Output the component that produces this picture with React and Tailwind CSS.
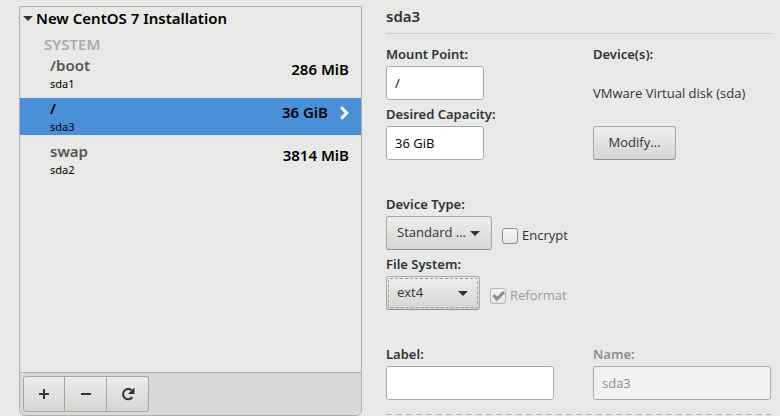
import { useState } from 'react';

const mountPoints = [
  { name: '/boot', device: 'sda1', size: '286 MiB' },
  { name: '/', device: 'sda3', size: '36 GiB' },
  { name: 'swap', device: 'sda2', size: '3814 MiB' },
];

const ArrowDown = ({ className }) => (
  <svg viewBox="0 0 10 5" className={`h-[5px] w-[10px] ${className}`} fill="currentColor" aria-hidden="true">
    <path d="M0 0h10L5 5z" />
  </svg>
);

const Field = ({ id, label, disabled, children }) => (
  <div className="flex flex-col items-start">
    <label htmlFor={id} className={`h-5 font-['Noto_Sans',sans-serif] text-[13px] leading-4 font-semibold ${disabled ? 'text-[#8d8f8f]' : ''}`}>
      {label}
    </label>
    {children}
  </div>
);

const TextBox = ({ className = '', ...props }) => (
  <input
    type="text"
    className={`h-[34px] rounded-[3px] border border-[#a9a9a6] bg-white px-2 text-[13px] text-black outline-none disabled:bg-[#f1f1f1] disabled:text-[#8d8f8f] ${className}`}
    {...props}
  />
);

const Dropdown = ({ id, className, children }) => (
  <div className={`relative ${className}`}>
    <select
      id={id}
      className="h-[34px] w-full appearance-none rounded-[3px] border border-[#a7a7a4] border-b-[#8f8f8c] bg-linear-to-b from-[#ededec] to-[#d5d5d3] pl-[10px] text-[13px] outline-none"
    >
      {children}
    </select>
    <ArrowDown className="pointer-events-none absolute top-[15px] right-[12px]" />
  </div>
);

const CheckBox = ({ label, disabled, ...props }) => (
  <label className={`flex h-7 items-center gap-1 self-end text-[13px] ${disabled ? 'text-[#9a9b9b]' : ''}`}>
    <span className="relative size-4">
      <input
        type="checkbox"
        disabled={disabled}
        className="peer block size-4 appearance-none rounded-[3px] border border-[#8f8f8c] bg-linear-to-b from-[#f4f4f4] to-[#e6e6e5] disabled:border-[#b4b4b2]"
        {...props}
      />
      <svg viewBox="0 0 16 16" className="pointer-events-none invisible absolute inset-0 size-4 peer-checked:visible" fill="none" stroke="#8d8f8f" strokeWidth="3" aria-hidden="true">
        <path d="M3.5 7l3.4 4L14 4" />
      </svg>
    </span>
    {label}
  </label>
);

const App = () => {
  const [selected, setSelected] = useState('sda3');
  const [encrypt, setEncrypt] = useState(false);

  const toolButton = 'flex h-9 w-[42px] items-center justify-center border-[#a7a7a4] bg-linear-to-b from-[#ededec] to-[#d5d5d3]';

  return (
    <div className="grid min-h-screen grid-cols-[343fr_385fr] gap-6 bg-[#e8e8e7] pt-1.5 pr-[9px] pl-[19px] text-[#2e3436]">
      <section className="flex flex-col rounded-b-md border border-[#b0b0a9] font-['Noto_Sans',sans-serif]">
        <h2 className="flex h-[22px] items-center gap-[3px] pl-[3px] text-[15px] font-semibold text-black">
          <ArrowDown className="text-[#2e3436]" />
          New CentOS 7 Installation
        </h2>
        <h3 className="mt-[5px] pl-6 text-[15px] leading-[21px] font-semibold text-[#aaaaa9]">SYSTEM</h3>
        <ul className="flex flex-1 flex-col gap-1.5">
          {mountPoints.map((mp) => {
            const active = mp.device === selected;
            return (
              <li key={mp.device}>
                <button
                  type="button"
                  onClick={() => setSelected(mp.device)}
                  className={`flex h-[37px] w-full items-start justify-between pr-3 pl-[30px] text-left text-black ${active ? 'bg-[#4a90d9]' : ''}`}
                >
                  <span>
                    <span className={`block text-[15px] leading-[21px] font-semibold ${active ? '' : 'text-[#555756]'}`}>{mp.name}</span>
                    <span className="block text-[11px] leading-[15px]">{mp.device}</span>
                  </span>
                  <span className="flex items-center gap-3 text-[15px] leading-[29px] font-semibold">
                    {mp.size}
                    {active && (
                      <svg viewBox="0 0 9 14" className="h-[14px] w-[9px]" fill="none" stroke="#fff" strokeWidth="3" aria-hidden="true">
                        <path d="M1.2 1.2L6.8 7l-5.6 5.8" />
                      </svg>
                    )}
                  </span>
                </button>
              </li>
            );
          })}
        </ul>
        <div className="flex rounded-b-md border-t border-[#b0b0ae] bg-[#d8d8d7] p-[3px]">
          <button type="button" aria-label="Add" className={`${toolButton} rounded-l-[3px] border`}>
            <svg viewBox="0 0 12 12" className="size-3" stroke="currentColor" strokeWidth="2" aria-hidden="true">
              <path d="M6 1v10M1 6h10" />
            </svg>
          </button>
          <button type="button" aria-label="Remove" className={`${toolButton} border-y border-r`}>
            <svg viewBox="0 0 12 12" className="size-3" stroke="currentColor" strokeWidth="2" aria-hidden="true">
              <path d="M1 6h10" />
            </svg>
          </button>
          <button type="button" aria-label="Reload" className={`${toolButton} rounded-r-[3px] border-y border-r`}>
            <svg viewBox="0 0 14 14" className="size-[14px]" fill="none" stroke="currentColor" strokeWidth="2" aria-hidden="true">
              <path d="M10.5 3.3A5.1 5.1 0 1 0 11.3 10.2" />
              <path d="M13.5 0.5v6.5H7z" fill="currentColor" stroke="none" />
            </svg>
          </button>
        </div>
      </section>

      <section className="flex flex-col font-['Open_Sans',sans-serif]">
        <h2 className="h-7 border-b border-[#c9c9c7] font-['Noto_Sans',sans-serif] text-[15px] leading-[21px] font-semibold">sda3</h2>
        <div className="grid grid-cols-[168fr_178fr] gap-x-[39px] pt-3">
          <div className="flex flex-col gap-1.5">
            <Field id="mount" label="Mount Point:">
              <TextBox id="mount" className="w-[98px]" defaultValue="/" />
            </Field>
            <Field id="capacity" label="Desired Capacity:">
              <TextBox id="capacity" className="w-[98px]" defaultValue="36 GiB" />
            </Field>
          </div>
          <div className="flex flex-col items-start text-[13px]">
            <h3 className="h-5 font-['Noto_Sans',sans-serif] leading-4 font-semibold">Device(s):</h3>
            <p className="flex h-[60px] items-center pb-1 whitespace-nowrap">VMware Virtual disk (sda)</p>
            <button
              type="button"
              className="h-[34px] w-[83px] rounded-[3px] border border-[#a7a7a4] border-b-[#8f8f8c] bg-linear-to-b from-[#ededec] to-[#d5d5d3]"
            >
              Modify...
            </button>
          </div>
        </div>

        <div className="mt-9 flex flex-col gap-1.5">
          <Field id="type" label="Device Type:">
            <div className="flex gap-[10px]">
              <Dropdown id="type" className="w-[106px]">
                <option>Standard ...</option>
              </Dropdown>
              <CheckBox label="Encrypt" checked={encrypt} onChange={(e) => setEncrypt(e.target.checked)} />
            </div>
          </Field>
          <Field id="fs" label="File System:">
            <div className="flex gap-[10px]">
              <div className="relative">
                <Dropdown id="fs" className="w-[94px]">
                  <option>ext4</option>
                </Dropdown>
                <span className="pointer-events-none absolute inset-0.5 rounded-[2px] border border-dashed border-[#9c9c9a]" />
              </div>
              <CheckBox label="Reformat" disabled defaultChecked />
            </div>
          </Field>
        </div>

        <div className="mt-9 grid grid-cols-[168fr_178fr] gap-x-[39px] pb-[14px]">
          <Field id="label" label="Label:">
            <TextBox id="label" className="w-full" />
          </Field>
          <Field id="name" label="Name:" disabled>
            <TextBox id="name" className="w-full" disabled defaultValue="sda3" />
          </Field>
        </div>
        <div className="h-px bg-[repeating-linear-gradient(90deg,#b5b5b3_0_6px,transparent_6px_10px)]" />
      </section>
    </div>
  );
};

export default App;
